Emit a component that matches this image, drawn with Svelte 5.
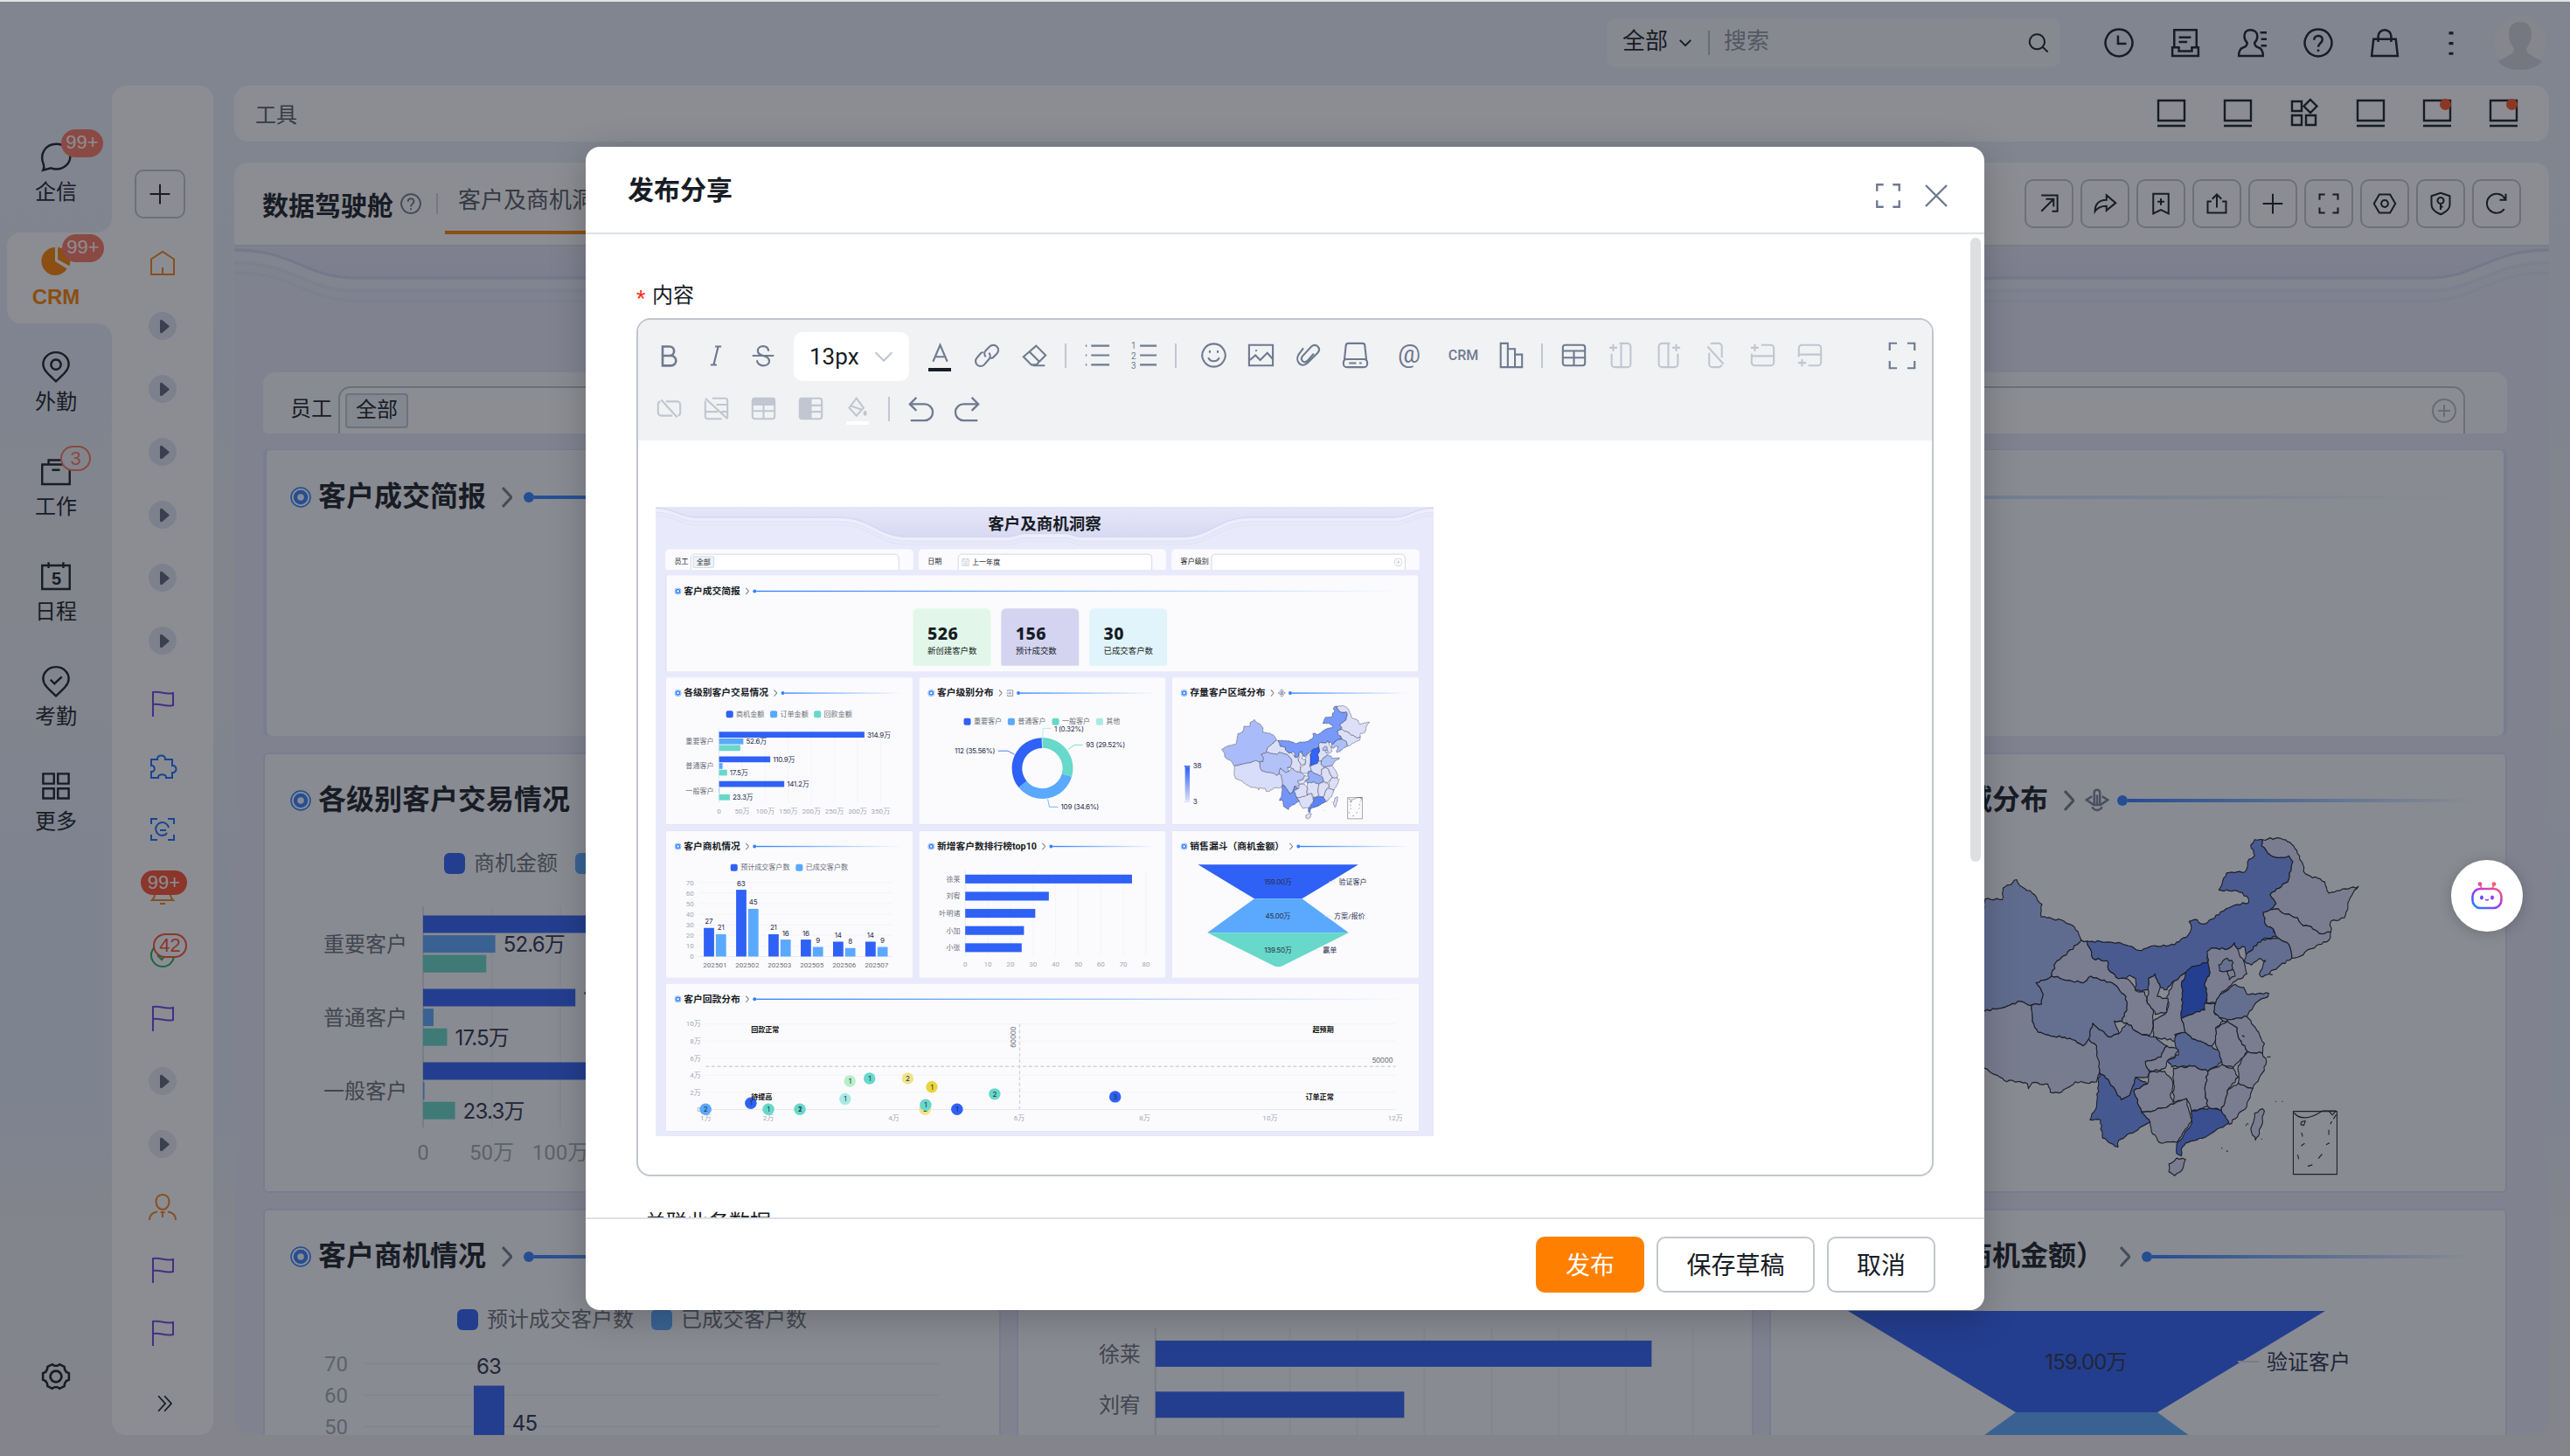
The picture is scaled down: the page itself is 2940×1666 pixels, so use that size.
<script lang="ts">
	type Point = [number, number];

	const BLUE = '#2f61f6';
	const SKY = '#5aa9ff';
	const TEAL = '#67d8c9';
	const MINT = '#a8ebe2';

	// All icons live on a 32x32 grid and are stroked
	const icons: Record<string, string> = {
		chat: 'M3 29c1-2 1-4 .5-5.500C-1 13 5 2.500 16.500 2.500c8 0 14 5.500 14 12.500s-6 13-14 13c-2 0-4-.4-5.500-1z',
		pin: 'M16 30.500C11 25.500 3 20 3 13a13 12 0 0 1 26 0c0 7-8 12.500-13 17.500zM16 8.500a5 5 0 1 0 .01 0z',
		pinCheck: 'M16 30.500C11 25.500 3 20 3 13a13 12 0 0 1 26 0c0 7-8 12.500-13 17.500zM10.500 14l4 4 7.500-7',
		work: 'M2 8.500h28v20H2zM8.500 8V4h14v4M12 14h8',
		calendar: 'M2 4.500h28v24H2zM8.500 1v6M23.500 1v6',
		grid: 'M3 3h11v10H3zM18 3h11v10H18zM3 18h11v10H3zM18 18h11v10H18z',
		gear: 'M12 3l2.500 1.500h3L20 3l5 2.500.5 3 1.500 2.500 3 1.500v7l-3 1.500-1.500 2.500-.5 3-5 2.500-2.500-1.500h-3L12 29l-5-2.500-.5-3L5 21l-3-1.500v-7L5 11l1.500-2.500.5-3zM16 10a6 6 0 1 0 .01 0z',
		plus: 'M16 3v26M3 16h26',
		home: 'M3 11.500L16 3l13 8.500V29H3zM16 29v-8',
		flag: 'M5 31V3c8-2 13 3.500 23 1v14c-10 2.500-15-3-23-1',
		puzzle: 'M3 8h7c-1-6 10-6 9 0h8v7c6-1 6 9 0 8v6h-7c1-5-10-5-9 0H3v-7c5 1 5-8 0-7z',
		scan: 'M3 10V4h7M22 4h7v6M3 22v6h7M22 28h7v-6M23 14a7.500 7.500 0 1 0-8 9c3 0 5-1 6-3M13 17h7',
		bell: 'M4 25h24c-3-3-3-5-3-9a9 9 0 0 0-18 0c0 4 0 6-3 9zM13 29h6',
		check: 'M16 3a13 13 0 1 0 .01 0zM10 16l5 5 8-9',
		person: 'M16 2c-5 0-7.500 3.500-7.500 8s3 9 7.500 9 7.500-4.500 7.500-9S21 2 16 2zM1 31c0-6 3-8.500 9-9.500M31 31c0-6-3-8.500-9-9.500M13.500 22h5M16 22v6',
		more: 'M7 6l9 10-9 10M15 6l9 10-9 10',
		search: 'M14 4a10.500 10.500 0 1 0 .01 0zM22 22l7 7',
		clock: 'M16 1.500a14.500 14.500 0 1 0 .01 0zM15 8v9h9',
		inbox: 'M4 21V2h24v19M9 10h13M9 15h9M2 21h7v4h14v-4h7v9H2z',
		contact: 'M14 2c-4 0-6 3-6 7 0 3 1 5 3 7 0 3-1 4-4 5-4 1-5 4-5 9h26c0-5-1-8-5-9-3-1-4-2-4-5 2-2 3-4 3-7 0-4-3-7-8-7zM25 5h7M26 12h6M26 19h6',
		help: 'M16 1.500a14.500 14.500 0 1 0 .01 0zM11.500 13c0-6 9-6 9-.5 0 4-4.500 4-4.500 8M16 23v2.500',
		bag: 'M4 12h24l2 18H2zM9 15V9a7 7 0 0 1 14 0v6',
		dots: 'M16 4v3M16 15v3M16 26v3',
		screen: 'M1 2h30v23H1zM0 31h32',
		apps: 'M2 3h11v11H2zM23 1l7.500 7.500L23 16l-7.500-7.500zM2 19h11v11H2zM18 19h11v11H18z',
		out: 'M6 5h21v21h-7M6 26L22 10M12 10h10v10',
		share: 'M18 5l12 10-12 10v-6c-8 0-12 2-15 7 0-9 5-15 15-15z',
		bookmark: 'M6 3h20v26l-10-5-10 5zM16 9v9M11.500 13.500h9',
		upload: 'M9 13H4v15h24V13h-5M16 21V4M10 10l6-6 6 6',
		full: 'M4 11V4h7M21 4h7v7M28 21v7h-7M11 28H4v-7',
		hexagon: 'M9 4h14l7 12-7 12H9L2 16zM16 11.500a4.500 4.500 0 1 0 .01 0z',
		shield: 'M16 2l12 4v11c0 6-5 10-12 13C9 27 4 23 4 17V6zM16 8a4 4 0 1 0 .01 0zM16 16v8M16 20h3',
		refresh: 'M26 23a12.500 12.500 0 1 1 1-13M28 3v8h-8',
		close: 'M4 4l24 24M28 4L4 28',
		bold: 'M8 4h9a6 6 0 0 1 0 12H8zM8 16h11a6.500 6.500 0 0 1 0 13H8z',
		italic: 'M15 4h8M9 28h8M19 4l-6 24',
		strike: 'M23 10c0-4-3-6.500-7-6.500S9 6 9 9.500 12 15 16 16s8 3 8 7-4 6-8 6-8-3-8-7M2 16h28',
		color: 'M7 24L16 3l9 21M10 18h12',
		link: 'M14 18a6 6 0 0 1 0-8l5-5a6 6 0 0 1 9 9l-5 5-3 1M18 13a6 6 0 0 1 0 8l-6 7a6 6 0 0 1-9-9l5-6 3-1',
		eraser: 'M18 4l12 12-12 12h-6L2 18zM9 11l13 13M14 29h15',
		list: 'M8 4h23M8 16h23M8 28h23M1 4h1.500M1 16h1.500M1 28h1.500',
		numbered: 'M10 4h21M10 16h21M10 28h21',
		smile: 'M16 1.500a14.500 14.500 0 1 0 .01 0zM11 10v3M21 10v3M9 19c3 6 11 6 14 0',
		image: 'M1 3h30v26H1zM2 22l7-6 6 6 9-9 7 8M10 9v2',
		clip: 'M10 7L4 15c-5 8 3 18 11 11L28 13c5-6-2-13-8-8L9 17c-4 5 2 10 6 6l8-9',
		disk: 'M2 23L4 4c0-2 1-3 3-3h18c2 0 3 1 3 3l2 19M5 21h22a4 4 0 0 1 4 4v2a4 4 0 0 1-4 4H5a4 4 0 0 1-4-4v-2a4 4 0 0 1 4-4zM8 26h9M21 26h3',
		bars: 'M3 1h9v30H3zM12 8h9v23h-9zM21 15h9v16h-9z',
		table: 'M5 3h22a3 3 0 0 1 3 3v20a3 3 0 0 1-3 3H5a3 3 0 0 1-3-3V6a3 3 0 0 1 3-3zM2 10.500h28M2 19h28M16 10v19',
		colBefore: 'M14 1h10a4 4 0 0 1 4 4v22a4 4 0 0 1-4 4H8a4 4 0 0 1-4-4V14M16 1v30M6 2v9M1 6.500h10',
		colAfter: 'M18 1H8a4 4 0 0 0-4 4v22a4 4 0 0 0 4 4h16a4 4 0 0 0 4-4V14M16 1v30M26 2v9M21 6.500h10',
		colRemove: 'M8 13v14a4 4 0 0 0 4 4h8c2 0 3-1 4-3M10 2c1-1 2-1 3-1h7a4 4 0 0 1 4 4v14M6 5l20 22',
		rowBefore: 'M14 3h12a4 4 0 0 1 4 4v18a4 4 0 0 1-4 4H6a4 4 0 0 1-4-4V14M2 17h28M6 2v9M1 6.500h10',
		rowAfter: 'M14 29h12a4 4 0 0 0 4-4V7a4 4 0 0 0-4-4H6a4 4 0 0 0-4 4v11M2 15h28M6 21v9M1 25.500h10',
		merge: 'M12 7h14a4 4 0 0 1 4 4v10a4 4 0 0 1-3 4M20 25H6a4 4 0 0 1-4-4V11a4 4 0 0 1 3-4M6 5l20 22',
		tableOff: 'M11 3h16a3 3 0 0 1 3 3v22M23 29H5a3 3 0 0 1-3-3V6M2 3l28 26M16 11h14M2 20h16M22 20h8',
		bucket: 'M14 3l9 12-9 10L5 15zM8 13l12 4M25 19c-2 3-1 5 0 5s2-2 0-5',
		undo: 'M11 2L3 10l8 8M4 10h17a9 9 0 0 1 0 20H4',
		redo: 'M21 2l8 8-8 8M28 10H11a9 9 0 0 0 0 20h17',
		enter: 'M6 9V4h22v24H6v-5M2 16h18M15 10l6 6-6 6',
		drill: 'M16 1c-3 0-4 2-4 4v17h8V5c0-2-1-4-4-4zM16 8v14M9 10l-8 5 10 7M23 10l8 5-10 7M9 25c3 6 11 6 14 0',
		down: 'M6 11l10 10 10-10'
	};

	const navItems = [
		{ label: '企信', icon: 'chat', badge: '99+' },
		{ label: 'CRM', icon: 'pie', badge: '99+', active: true },
		{ label: '外勤', icon: 'pin' },
		{ label: '工作', icon: 'work', badge: '3' },
		{ label: '日程', icon: 'calendar' },
		{ label: '考勤', icon: 'pinCheck' },
		{ label: '更多', icon: 'grid' }
	];

	const railItems = [
		{ icon: 'home', color: '#f58220' },
		...Array.from({ length: 6 }, () => ({ icon: 'play', color: '#e1e7f4' })),
		{ icon: 'flag', color: '#7341e0' },
		{ icon: 'puzzle', color: '#1a6dff' },
		{ icon: 'scan', color: '#1a6dff' },
		{ icon: 'bell', color: '#f58220', badge: '99+' },
		{ icon: 'check', color: '#1fae62', badge: '42' },
		{ icon: 'flag', color: '#7341e0' },
		{ icon: 'play', color: '#e8e9f2' },
		{ icon: 'play', color: '#e8e9f2' },
		{ icon: 'person', color: '#f58220' },
		{ icon: 'flag', color: '#7341e0' },
		{ icon: 'flag', color: '#7341e0' }
	];

	const topIcons = ['clock', 'inbox', 'contact', 'help', 'bag', 'dots'];
	const toolIcons = [
		{ icon: 'screen' },
		{ icon: 'screen' },
		{ icon: 'apps' },
		{ icon: 'screen' },
		{ icon: 'screen', dot: true },
		{ icon: 'screen', dot: true }
	];
	const boardActions = ['out', 'share', 'bookmark', 'upload', 'plus', 'full', 'hexagon', 'shield', 'refresh'];

	const kpis = [
		{ value: 526, label: '新创建客户数', color: '#e2f7e9' },
		{ value: 156, label: '预计成交数', color: '#d4d4f1' },
		{ value: 30, label: '已成交客户数', color: '#e1f4fb' }
	];

	// Amounts in 万
	const levels = [
		{ name: '重要客户', y: 798, values: [314.9, 52.6, 46], labels: ['314.9万', '52.6万', ''] },
		{ name: '普通客户', y: 882, values: [110.9, 7.6, 17.5], labels: ['110.9万', '', '17.5万'] },
		{ name: '一般客户', y: 966, values: [141.2, 1, 23.3], labels: ['141.2万', '', '23.3万'] }
	];
	const levelColors = [BLUE, SKY, TEAL];
	const levelScale = 1.571;

	const slices = [
		{ pct: 29.52, color: TEAL },
		{ pct: 34.6, color: SKY },
		{ pct: 35.56, color: BLUE },
		{ pct: 0.32, color: MINT }
	];

	function arc(start: number, end: number) {
		const cx = 1318, cy = 890, R = 104, r = 69;
		const p = (pct: number, rad: number) => {
			const a = (pct / 100) * Math.PI * 2;
			return `${cx + rad * Math.sin(a)} ${cy - rad * Math.cos(a)}`;
		};
		return `M${p(start, R)}A${R} ${R} 0 0 1 ${p(end, R)}L${p(end, r)}A${r} ${r} 0 0 0 ${p(start, r)}Z`;
	}

	let sum = 0;
	const donut = slices.map((s) => {
		const d = arc(sum, sum + s.pct);
		sum += s.pct;
		return { d, color: s.color };
	});

	const months = [
		{ name: '202501', a: 27, b: 21 },
		{ name: '202502', a: 63, b: 45 },
		{ name: '202503', a: 21, b: 16 },
		{ name: '202505', a: 16, b: 9 },
		{ name: '202506', a: 14, b: 8 },
		{ name: '202507', a: 14, b: 9 }
	];

	const ranking = [
		{ name: '徐莱', value: 73.8 },
		{ name: '刘宥', value: 37 },
		{ name: '叶明诸', value: 31 },
		{ name: '小加', value: 26 },
		{ name: '小张', value: 25 }
	];

	const bubbles = [
		{ x: 170, y: 2050, n: 2, color: SKY },
		{ x: 324, y: 2029, n: 1, color: BLUE },
		{ x: 384, y: 2050, n: 1, color: TEAL },
		{ x: 491, y: 2050, n: 2, color: TEAL },
		{ x: 491, y: 2050, n: 1, color: 'none' },
		{ x: 661, y: 1954, n: 1, color: '#b8efc6' },
		{ x: 728, y: 1945, n: 1, color: TEAL },
		{ x: 645, y: 2015, n: 1, color: MINT },
		{ x: 858, y: 1945, n: 2, color: '#efe38c' },
		{ x: 940, y: 1974, n: 1, color: '#e8d63e' },
		{ x: 917, y: 2050, n: 2, color: '#efe38c' },
		{ x: 919, y: 2035, n: 1, color: TEAL },
		{ x: 1026, y: 2050, n: 1, color: BLUE },
		{ x: 1154, y: 1998, n: 2, color: TEAL },
		{ x: 1564, y: 2007, n: 3, color: BLUE }
	];

	const BASE = '#dcdff8';
	const provinces: { color: string; pts: string }[] = [
		{ color: '#a9bcf9', pts: '-102,483 -58,460 10,444 22,377 60,367 70,328 113,330 115,304 140,292 150,285 158,298 190,315 215,340 213,368 265,375 298,390 316,420 305,430 270,455 250,470 240,500 200,515 218,540 214,562 188,565 160,556 105,572 67,578 -5,592 -30,560 -75,535 -80,505' },
		{ color: BASE, pts: '316,420 330,422 345,460 382,465 385,485 410,505 430,505 440,510 455,532 478,535 485,560 500,575 500,610 490,632 470,630 432,604 400,600 420,600 432,570 430,545 395,515 340,500 320,515 240,500 250,470 270,455 305,430' },
		{ color: '#b2c2f8', pts: '240,500 320,515 340,500 395,515 430,545 432,570 420,600 400,600 412,628 385,635 345,605 335,640 320,655 300,643 205,625 190,600 188,565 214,562 218,540 200,515' },
		{ color: '#d8ddf9', pts: '-5,592 67,578 105,572 160,556 188,565 190,600 205,625 300,643 320,655 335,640 355,655 362,700 362,715 355,735 330,738 300,735 265,758 236,758 230,740 190,737 180,750 178,740 140,732 125,735 80,712 53,690 5,675 -7,652' },
		{ color: '#7898fa', pts: '330,422 385,424 410,425 470,443 505,432 555,430 590,408 598,393 592,378 605,374 632,384 680,355 708,342 745,336 740,322 715,310 668,308 688,270 735,268 745,240 760,232 750,208 760,196 780,196 778,210 800,230 822,236 848,232 858,245 845,290 800,318 815,338 800,352 782,358 788,385 808,395 815,412 780,418 738,452 735,435 715,438 708,426 690,440 650,437 638,460 640,470 583,492 555,510 535,530 518,525 505,495 488,505 490,530 455,532 455,505 440,498 430,505 410,505 385,485 382,465 345,460' },
		{ color: BASE, pts: '780,196 820,192 850,202 868,220 890,272 940,290 950,315 1026,300 1005,325 990,370 955,378 955,402 925,405 905,390 885,388 870,370 840,362 820,350 800,352 815,338 800,318 845,290 858,245 848,232 822,236 800,230 778,210' },
		{ color: BASE, pts: '800,352 820,350 840,362 870,370 885,388 905,390 925,405 955,402 950,420 900,440 885,452 855,460 848,430 820,415 808,395 788,385 782,358' },
		{ color: '#acbff9', pts: '738,452 780,418 820,415 848,430 855,460 820,480 780,502 772,495 788,465 770,462 752,475 733,465' },
		{ color: BASE, pts: '640,470 638,445 650,437 690,440 708,426 715,438 720,450 735,475 740,495 712,510 700,520 672,540 660,560 636,558 638,540 632,515 645,492' },
		{ color: '#b2c2f8', pts: '668,475 690,460 705,470 700,488 670,488' },
		{ color: BASE, pts: '690,488 705,485 710,500 695,508' },
		{ color: '#3263fb', pts: '583,492 600,478 640,470 645,492 632,515 638,540 632,575 600,585 572,594 575,545 572,520' },
		{ color: BASE, pts: '583,492 572,520 575,545 572,594 582,625 555,630 565,645 500,635 500,600 530,585 540,565 535,545 555,510' },
		{ color: BASE, pts: '488,505 505,495 518,525 510,545 538,550 535,580 505,585 500,575 485,560' },
		{ color: '#b0c1f8', pts: '660,560 672,540 710,518 732,525 740,540 796,538 794,546 765,558 740,590 700,598 665,592 655,580' },
		{ color: '#d8ddf9', pts: '632,560 660,560 655,580 680,600 660,615 660,640 650,655 600,640 582,625 572,594 600,585 632,575' },
		{ color: BASE, pts: '680,600 740,590 765,620 785,650 780,672 742,668 720,640 715,615' },
		{ color: BASE, pts: '660,615 690,600 715,615 720,640 742,668 720,690 705,703 678,698 665,668 660,640' },
		{ color: '#93acfa', pts: '560,630 582,625 600,640 650,655 670,670 675,692 640,712 600,700 548,702 536,688 565,675 555,645' },
		{ color: '#bcc9f8', pts: '345,605 385,635 412,628 432,604 470,630 505,635 535,655 520,680 480,690 490,715 485,725 455,725 440,765 418,775 385,730 362,715 355,655 335,640' },
		{ color: BASE, pts: '535,655 565,665 555,680 536,688 530,705 500,712 485,705 480,690 520,680' },
		{ color: BASE, pts: '490,715 530,712 550,735 545,770 552,785 500,800 470,802 450,755 485,740' },
		{ color: '#7494fa', pts: '362,715 385,730 418,775 440,765 455,725 485,740 450,755 470,802 492,825 440,850 412,865 410,880 370,860 365,820 338,820 355,790' },
		{ color: BASE, pts: '470,802 500,800 552,785 585,772 592,800 600,820 575,850 560,870 515,870 495,845 492,825' },
		{ color: '#5a82fb', pts: '598,800 650,792 690,805 692,828 640,855 590,870 575,880 572,900 560,895 560,875 600,825' },
		{ color: BASE, pts: '552,705 600,700 640,712 632,750 640,790 598,800 585,772 552,780' },
		{ color: BASE, pts: '640,712 675,697 705,705 718,725 690,755 675,800 640,790 632,750' },
		{ color: BASE, pts: '718,738 755,750 740,790 695,830 675,800 690,755' },
		{ color: BASE, pts: '742,668 780,672 790,690 780,715 755,750 718,738 718,700' },
		{ color: BASE, pts: '780,795 785,800 772,850 762,865 750,840 760,805' },
		{ color: BASE, pts: '540,918 560,905 583,908 575,930 555,944 540,935' }
	];

	// Break straight borders into small steps; both sides of a shared border get the same ones
	function roughen(str: string) {
		const pts = str.split(' ').map((p) => p.split(',').map(Number) as Point);
		const out: Point[] = [];
		pts.forEach((a, i) => {
			const b = pts[(i + 1) % pts.length];
			const flip = a[0] > b[0] || (a[0] === b[0] && a[1] > b[1]);
			const [p, q] = flip ? [b, a] : [a, b];
			const len = Math.hypot(q[0] - p[0], q[1] - p[1]);
			const n = Math.max(1, Math.round(len / 7));
			const seg: Point[] = [];
			for (let k = 1; k < n; k++) {
				const h = Math.sin(p[0] * 12.9 + p[1] * 78.2 + q[0] * 3.7 + k * 41.3) * 43758.5;
				const off = (h - Math.floor(h) - 0.5) * 5;
				seg.push([
					p[0] + ((q[0] - p[0]) * k) / n - ((q[1] - p[1]) / len) * off,
					p[1] + ((q[1] - p[1]) * k) / n + ((q[0] - p[0]) / len) * off
				]);
			}
			out.push(a, ...(flip ? seg.reverse() : seg));
		});
		return out.map((p) => `${p[0].toFixed(1)},${p[1].toFixed(1)}`).join(' ');
	}

	const regions = provinces.map((p) => ({ color: p.color, pts: roughen(p.pts) }));

	const wave =
		'M0 4C70 4 80 36 140 36H620C740 36 750 102 860 102H1200C1225 102 1230 91 1255 91H1393C1418 91 1423 102 1448 102H1788C1898 102 1908 36 2028 36H2508C2568 36 2578 4 2648 4';

	// '|' is a divider
	const tools1 = ['color', 'link', 'eraser', '|', 'list', 'numbered', '|s', 'smile', 'image', 'clip', 'disk', '@', 'CRM', 'bars', '|', 'table'];
	const toolsOff1 = ['colBefore', 'colAfter', 'colRemove', 'rowBefore', 'rowAfter'];
	const toolsOff2 = ['merge', 'tableOff', 'headRow', 'headCol', 'bucket'];
</script>

{#snippet icon(name: string, size = 32, width = 2)}
	<svg class="icon" viewBox="0 0 32 32" style="width: {size}px; height: {size}px; stroke-width: {(width * 32) / size}">
		<path d={icons[name]} />
	</svg>
{/snippet}

{#snippet cardTitle(text: string, extra = '')}
	<div class="card-title">
		<svg class="ring" viewBox="0 0 24 24">
			<circle cx="12" cy="12" r="11" stroke-width="1.6" />
			<circle cx="12" cy="12" r="6" stroke-width="4.500" />
		</svg>
		<h3>{text}</h3>
		<svg class="go" viewBox="0 0 12 26"><path d="M1 2l10 11L1 24" /></svg>
		{#if extra}<span class="extra">{@render icon(extra, 26, 2.5)}</span>{/if}
		<i class="knob"></i>
		<i class="trail"></i>
	</div>
{/snippet}

{#snippet legend(items: [number, string, string][], y: number)}
	{#each items as [x, label, color]}
		<rect {x} y={y - 12} width="24" height="24" rx="6" fill={color} />
		<text x={x + 34} y={y - 1} dy=".36em" class="t-mid">{label}</text>
	{/each}
{/snippet}

{#snippet dashboard()}
	<div class="board">
		<svg class="waves" viewBox="0 0 2648 144">
			<defs>
				<linearGradient id="wave-fill" x1="0" y1="0" x2="0" y2="1">
					<stop offset="0" stop-color="#e6e6f9" />
					<stop offset="1" stop-color="#d8d9f3" />
				</linearGradient>
			</defs>
			<path d="{wave}V0H0Z" fill="url(#wave-fill)" />
			<g transform="translate(0 7)"><path d={wave} class="wave-line light" /></g>
			<g transform="translate(0 15)"><path d={wave} class="wave-line faint" /></g>
			<g transform="translate(0 26)"><path d={wave} class="wave-line faint" /></g>
			<path d={wave} class="wave-line" />
		</svg>
		<h2>客户及商机洞察</h2>

		<div class="filters">
			<div class="filter">
				<label>员工</label>
				<div class="field"><span class="tag">全部</span></div>
			</div>
			<div class="filter date">
				<label>日期</label>
				<div class="field">
					<svg viewBox="0 0 26 28" class="cal"><path d="M1 4h24v22H1zM1 11h24M6 17h14M6 22h14M7 0v7M19 0v7" /></svg>
					上一年度
				</div>
			</div>
			<div class="filter level">
				<label>客户级别</label>
				<div class="field end">
					<svg viewBox="0 0 28 28" class="add"><circle cx="14" cy="14" r="13" /><path d="M14 7v14M7 14h14" /></svg>
				</div>
			</div>
		</div>

		<section class="card brief">
			{@render cardTitle('客户成交简报')}
			<div class="kpis">
				{#each kpis as k}
					<div class="kpi" style="background: {k.color}">
						<b>{k.value}</b>
						<span>{k.label}</span>
					</div>
				{/each}
			</div>
		</section>

		<div class="cards">
			<section class="card">
				{@render cardTitle('各级别客户交易情况')}
				<svg class="chart" viewBox="33 659 844 424">
					{@render legend([[240, '商机金额', BLUE], [390, '订单金额', SKY], [539, '回款金额', TEAL]], 706)}
					{#each [0, 50, 100, 150, 200, 250, 300, 350] as v}
						<line x1={216 + v * levelScale} x2={216 + v * levelScale} y1="755" y2="1008" class={v ? 'grid' : 'axis'} />
						<text x={216 + v * levelScale} y="1036" dy=".36em" class="t-tick" text-anchor="middle">{v ? v + '万' : '0'}</text>
					{/each}
					{#each levels as l}
						<text x="198" y={l.y} dy=".36em" class="t-mid" text-anchor="end">{l.name}</text>
						{#each l.values as v, i}
							<rect x="216" y={l.y - 32.5 + i * 22.6} width={v * levelScale} height="20" fill={levelColors[i]} />
							{#if l.labels[i]}
								<text x={225 + v * levelScale} y={l.y - 22 + i * 22.6} dy=".36em" class="t-dark num">{l.labels[i]}</text>
							{/if}
						{/each}
					{/each}
				</svg>
			</section>

			<section class="card">
				{@render cardTitle('客户级别分布', 'enter')}
				<svg class="chart" viewBox="896 659 844 424">
					{@render legend([[1050, '重要客户', BLUE], [1200, '普通客户', SKY], [1351, '一般客户', TEAL], [1501, '其他', MINT]], 731)}
					{#each donut as s}
						<path d={s.d} fill={s.color} />
					{/each}
					<path d="M1167 831H1200L1223 843" stroke={BLUE} class="leader" />
					<path d="M1348 754H1320L1319 786" stroke={MINT} class="leader" />
					<path d="M1455 811H1427L1406 826" stroke={TEAL} class="leader" />
					<path d="M1371 1022H1342L1336 995" stroke={SKY} class="leader" />
					<text x="1156" y="830" dy=".36em" text-anchor="end" class="t-dark num">112 (35.56%)</text>
					<text x="1358" y="755" dy=".36em" class="t-dark num">1 (0.32%)</text>
					<text x="1466" y="811" dy=".36em" class="t-dark num">93 (29.52%)</text>
					<text x="1381" y="1022" dy=".36em" class="t-dark num">109 (34.6%)</text>
				</svg>
			</section>

			<section class="card">
				{@render cardTitle('存量客户区域分布', 'drill')}
				<svg class="chart" viewBox="1756 659 844 424">
					<defs>
						<linearGradient id="heat" x1="0" y1="0" x2="0" y2="1">
							<stop offset="0" stop-color={BLUE} />
							<stop offset="1" stop-color="#dcdff8" />
						</linearGradient>
					</defs>
					<rect x="1802" y="885" width="16" height="116" fill="url(#heat)" />
					<rect x="1799" y="881" width="20" height="4" fill={BLUE} />
					<rect x="1799" y="1002" width="20" height="4" fill="#dcdff8" />
					<text x="1829" y="882" dy=".36em" class="t-dark num">38</text>
					<text x="1829" y="1003" dy=".36em" class="t-dark num">3</text>
					<g transform="translate(1972 578) scale(.4464 .514)" class="map">
						{#each regions as r}
							<polygon points={r.pts} fill={r.color} />
						{/each}
						<rect x="859" y="801" width="112" height="140" fill="none" />
						<path d="M861 804c15 18 45 12 72-4h35l-9 9-8-8M880 824l10-2-4 10-8-2zM880 848l3 9M888 872l-9 6M870 897l3 10M896 923l12-3M923 906l10-10M943 875l9-4M950 842v11M954 829l4-6M962 818l7-10" fill="none" />
						<path d="M675 882l2 2M688 888l3 3M738 830v3M741 827l2 3M813 779h2M830 779h2M777 862h2M798 496l8 1M792 680l9-1M728 632l6 3" fill="none" />
					</g>
				</svg>
			</section>

			<section class="card">
				{@render cardTitle('客户商机情况')}
				<svg class="chart" viewBox="33 1181 844 424">
					{@render legend([[255, '预计成交客户数', BLUE], [477, '已成交客户数', SKY]], 1228)}
					{#each [0, 10, 20, 30, 40, 50, 60, 70] as v}
						<line x1="147" x2="806" y1={1530.700 - v * 3.606} y2={1530.700 - v * 3.606} class={v ? 'grid' : 'axis'} />
						<text x="130" y={1530.700 - v * 3.606} dy=".36em" text-anchor="end" class="t-tick">{v}</text>
					{/each}
					{#each months as m, i}
						<rect x={164 + i * 110} y={1530.700 - m.a * 3.606} width="35" height={m.a * 3.606} fill={BLUE} />
						<rect x={205 + i * 110} y={1530.700 - m.b * 3.606} width="35" height={m.b * 3.606} fill={SKY} />
						<text x={181 + i * 110} y={1508.500 - m.a * 3.606} dy=".36em" text-anchor="middle" class="t-dark num">{m.a}</text>
						<text x={222 + i * 110} y={1508.500 - m.b * 3.606} dy=".36em" text-anchor="middle" class="t-dark num">{m.b}</text>
						<text x={202 + i * 110} y="1558" dy=".36em" text-anchor="middle" class="t-mid">{m.name}</text>
					{/each}
				</svg>
			</section>

			<section class="card">
				{@render cardTitle('新增客户数排行榜top10')}
				<svg class="chart" viewBox="895 1181 844 424">
					{#each [0, 10, 20, 30, 40, 50, 60, 70, 80] as v}
						<line x1={1054 + v * 7.700} x2={1054 + v * 7.700} y1="1237" y2="1530" class={v ? 'grid' : 'axis'} />
						<text x={1054 + v * 7.700} y="1558" dy=".36em" text-anchor="middle" class="t-tick">{v}</text>
					{/each}
					{#each ranking as r, i}
						<rect x="1054" y={1252 + i * 58.500} width={r.value * 7.700} height="30" fill={BLUE} />
						<text x="1037" y={1267 + i * 58.500} dy=".36em" text-anchor="end" class="t-mid">{r.name}</text>
					{/each}
				</svg>
			</section>

			<section class="card">
				{@render cardTitle('销售漏斗（商机金额）')}
				<svg class="chart" viewBox="1756 1181 844 424">
					<polygon points="1846,1218 2392,1218 2200,1334 2038,1334" fill={BLUE} />
					<polygon points="2038,1334 2200,1334 2359,1450 1878,1450" fill={SKY} />
					<polygon points="1878,1450 2359,1450 2130,1564 2119,1566 2108,1564" fill={TEAL} />
					<path d="M2292 1276h24M2276 1393h24M2242 1509h20" class="axis" />
					<text x="2118" y="1276" dy=".36em" text-anchor="middle" class="t-dark num">159.00万</text>
					<text x="2118" y="1393" dy=".36em" text-anchor="middle" class="t-dark num">45.00万</text>
					<text x="2118" y="1509" dy=".36em" text-anchor="middle" class="t-dark num">139.50万</text>
					<text x="2325" y="1276" dy=".36em" class="t-dark">验证客户</text>
					<text x="2309" y="1393" dy=".36em" class="t-dark">方案/报价</text>
					<text x="2271" y="1509" dy=".36em" class="t-dark">赢单</text>
				</svg>
			</section>
		</div>

		<section class="card payback">
			{@render cardTitle('客户回款分布')}
			<svg class="chart" viewBox="33 1700 2567 426">
				{#each [0, 2, 4, 6, 8, 10] as v}
					<line x1="170" x2="2519" y1={2050.500 - v * 29.150} y2={2050.500 - v * 29.150} class={v ? 'grid' : 'axis'} />
					<text x="154" y={2050.500 - v * 29.150} dy=".36em" text-anchor="end" class="t-tick">{v ? v + '万' : '0'}</text>
				{/each}
				{#each [1, 2, 4, 6, 8, 10, 12] as v}
					<text x={-42.600 + v * 213.400} y="2079" dy=".36em" text-anchor="middle" class="t-tick">{v}万</text>
				{/each}
				<path d="M170 1904H2519M1239 1759V2050" class="mark" />
				<text x="2509" y="1883" dy=".36em" text-anchor="end" class="t-mid num">50000</text>
				<text transform="translate(1216 1804) rotate(-90)" dy=".36em" text-anchor="middle" class="t-mid num">60000</text>
				<text x="325" y="1780" dy=".36em" class="t-zone">回款正常</text>
				<text x="2308" y="1780" dy=".36em" text-anchor="end" class="t-zone">超预期</text>
				<text x="2308" y="2007" dy=".36em" text-anchor="end" class="t-zone">订单正常</text>
				{#each bubbles as b}
					<circle cx={b.x} cy={b.y} r="20" fill={b.color} />
					<text x={b.x} y={b.y} dy=".36em" text-anchor="middle" class="t-dark num">{b.n}</text>
				{/each}
				<text x="325" y="2007" dy=".36em" class="t-zone">待提高</text>
			</svg>
		</section>
	</div>
{/snippet}

<div class="page">
	<header class="topbar">
		<div class="search">
			<span>全部</span>
			{@render icon('down', 20, 2)}
			<i></i>
			<em>搜索</em>
			{@render icon('search', 26, 2)}
		</div>
		<div class="top-icons">
			{#each topIcons as name}
				<span>{@render icon(name, 34, name === 'dots' ? 5 : 2.5)}</span>
			{/each}
		</div>
		<svg class="avatar" viewBox="0 0 60 64">
			<ellipse cx="30" cy="32" rx="30" ry="32" fill="#f2f2f4" />
			<path d="M30 8c-9 0-13 6-13 14 0 9 4 13 6 17 0 6-8 8-18 14 5 7 14 10 24 10s21-3 26-10c-10-6-18-8-18-14 2-4 6-8 6-17 0-8-4-14-13-14z" fill="#d2d5da" />
		</svg>
	</header>

	<div class="body">
		<nav class="nav">
			{#each navItems as item}
				<div class="nav-item" class:active={item.active}>
					<div class="nav-icon">
						{#if item.icon === 'pie'}
							<svg viewBox="0 0 32 32" class="pie"><path d="M15 1v15l13 8A15 15 0 1 1 15 1zM18 1a15 15 0 0 1 12.500 20L18 14z" /></svg>
						{:else}
							{@render icon(item.icon, 36, 2.4)}
						{/if}
						{#if item.icon === 'calendar'}<b class="day">5</b>{/if}
						{#if item.badge}<span class="badge" class:hollow={item.badge === '3'}>{item.badge}</span>{/if}
					</div>
					<span>{item.label}</span>
				</div>
			{/each}
			<div class="settings">{@render icon('gear', 34, 2.6)}</div>
		</nav>

		<aside class="rail">
			<button class="add-btn" aria-label="add">{@render icon('plus', 28, 2)}</button>
			{#each railItems as r}
				<div class="rail-item" style="color: {r.color}">
					{#if r.icon === 'play'}
						<i class="play"><svg viewBox="0 0 12 16"><path d="M1 2c0-2 2-2 3-1l7 6c1 1 1 1 0 2l-7 6c-1 1-3 1-3-1z" /></svg></i>
					{:else}
						{@render icon(r.icon, 32, 2)}
					{/if}
					{#if r.badge}<span class="rail-badge" class:hollow={r.badge === '42'}>{r.badge}</span>{/if}
				</div>
			{/each}
			<div class="expand">{@render icon('more', 28, 1.8)}</div>
		</aside>

		<main>
			<div class="toolbar">
				<span>工具</span>
				<div class="tool-icons">
					{#each toolIcons as t}
						<span class="tool">
							{@render icon(t.icon, 32, 2.4)}
							{#if t.dot}<i></i>{/if}
						</span>
					{/each}
				</div>
			</div>
			<div class="board-head">
				<h1>数据驾驶舱</h1>
				<span class="hint">{@render icon('help', 24, 2)}</span>
				<i class="sep"></i>
				<div class="tab">客户及商机洞察</div>
				<div class="actions">
					{#each boardActions as a}
						<button aria-label={a}>{@render icon(a, 28, 2)}</button>
					{/each}
				</div>
			</div>
			<div class="viewport">{@render dashboard()}</div>
		</main>
	</div>

	<div class="mask"></div>
	<div class="edge"></div>

	<div class="robot">
		<svg viewBox="0 0 36 32">
			<defs>
				<linearGradient id="bot" x1="0" y1="1" x2="1" y2="0">
					<stop offset="0" stop-color="#1689ff" />
					<stop offset=".5" stop-color="#9b35ff" />
					<stop offset="1" stop-color="#ff5a6b" />
				</linearGradient>
			</defs>
			<rect x="1.500" y="8" width="33" height="22" rx="9" fill="none" stroke="url(#bot)" stroke-width="2.600" />
			<path d="M12 8L10 3M24 8l2-5" stroke="#f0489a" stroke-width="1.500" />
			<circle cx="10" cy="2.600" r="2.400" fill="#f0489a" />
			<circle cx="26" cy="2.600" r="2.400" fill="#ff5a6b" />
			<ellipse cx="12" cy="18" rx="2" ry="2.500" fill="#6a4bff" />
			<ellipse cx="24" cy="18" rx="2" ry="2.500" fill="#9b35ff" />
			<path d="M16 20q2 2 4 0" fill="none" stroke="#8a40ff" stroke-width="1.400" />
		</svg>
	</div>

	<div class="modal">
		<div class="modal-head">
			<h2>发布分享</h2>
			{@render icon('full', 34, 2.4)}
			{@render icon('close', 32, 2.4)}
		</div>
		<div class="modal-body">
			<div class="field-label"><b>*</b>内容</div>
			<div class="editor">
				<div class="tools">
					<div class="tools-row">
						<span>{@render icon('bold', 28, 2.6)}</span>
						<span>{@render icon('italic', 28, 2.2)}</span>
						<span>{@render icon('strike', 28, 2.2)}</span>
						<div class="select">13px{@render icon('down', 30, 2.2)}</div>
						{#each tools1 as t}
							{#if t[0] === '|'}
								<i class="divider" class:wide={t === '|s'}></i>
							{:else if t === '@' || t === 'CRM'}
								<span class="glyph" class:crm={t === 'CRM'}>{t}</span>
							{:else}
								<span class={t}>
									{@render icon(t, 29, 2.1)}
									{#if t === 'numbered'}
										<svg class="nums" viewBox="0 0 8 32"><text y="8">1</text><text y="19.500">2</text><text y="31">3</text></svg>
									{/if}
								</span>
							{/if}
						{/each}
						{#each toolsOff1 as t}
							<span class="off">{@render icon(t, 29, 2.1)}</span>
						{/each}
						<span class="last">{@render icon('full', 38, 2.2)}</span>
					</div>
					<div class="tools-row second">
						{#each toolsOff2 as t}
							<span class="off {t}">
								{#if t === 'headRow'}
									<svg viewBox="0 0 32 32" class="icon fixed"><path d={icons.table} /><path d="M3 4h26v7H3z" fill="currentColor" /></svg>
								{:else if t === 'headCol'}
									<svg viewBox="0 0 32 32" class="icon fixed"><path d="M5 3h22a3 3 0 0 1 3 3v20a3 3 0 0 1-3 3H5a3 3 0 0 1-3-3V6a3 3 0 0 1 3-3zM16 12h14M16 20h14" /><path d="M3 4h13v24H3z" fill="currentColor" /></svg>
								{:else}
									{@render icon(t, 29, 2.1)}
								{/if}
							</span>
						{/each}
						<i class="divider"></i>
						<span>{@render icon('undo', 30, 2.3)}</span>
						<span>{@render icon('redo', 30, 2.3)}</span>
					</div>
				</div>
				<div class="content">
					<div class="snapshot">{@render dashboard()}</div>
				</div>
			</div>
			<div class="field-label next">关联业务数据</div>
			<i class="scroll"></i>
		</div>
		<div class="modal-foot">
			<button class="primary">发布</button>
			<button>保存草稿</button>
			<button>取消</button>
		</div>
	</div>
</div>

<style>
	:global(body) {
		margin: 0;
	}

	.page {
		position: relative;
		width: 2940px;
		height: 1666px;
		overflow: hidden;
		font-family: Roboto, 'Noto Sans CJK SC', sans-serif;
		font-size: 24px;
		color: #181c25;
		background: linear-gradient(#eceffa 0, #e8edfa 430px, #eeeff3 620px, #eceef5 820px, #e4eafa 1000px, #e4eafa 1260px, #eeeef2 1400px, #eeeef1 100%);
	}

	.page *,
	.page *::before,
	.page *::after {
		box-sizing: border-box;
	}

	h1,
	h2,
	h3 {
		margin: 0;
	}

	i,
	em {
		font-style: normal;
	}

	button {
		padding: 0;
		font: inherit;
		color: inherit;
		background: none;
		border: 2px solid #c1c5ce;
		border-radius: 10px;
		display: flex;
		align-items: center;
		justify-content: center;
	}

	.icon {
		display: block;
		flex: none;
		fill: none;
		stroke: currentColor;
		overflow: visible;
	}

	.fixed {
		width: 29px;
		height: 29px;
		stroke-width: 2.3;
	}

	/* Top bar */
	.topbar {
		height: 98px;
		display: flex;
		align-items: center;
		padding-left: 1838px;
	}

	.search {
		width: 519px;
		height: 56px;
		display: flex;
		align-items: center;
		padding: 0 12px 0 18px;
		border-radius: 10px;
		font-size: 26px;
		line-height: 52px;
		background: rgba(255, 255, 255, 0.5);
	}

	.search span,
	.search em {
		height: 56px;
	}

	.search span {
		margin-right: 10px;
	}

	.search i {
		width: 2px;
		height: 28px;
		margin: 0 16px 0 16px;
		background: #b6bac6;
	}

	.search em {
		flex: 1;
		color: #91959e;
	}

	.top-icons {
		display: flex;
		margin-left: 29px;
	}

	.top-icons span {
		width: 76px;
		display: flex;
		justify-content: center;
	}

	.avatar {
		width: 60px;
		height: 64px;
		margin-left: 11px;
	}

	.body {
		display: flex;
		height: 1544px;
	}

	/* Left navigation */
	.nav {
		width: 128px;
		padding-top: 48px;
		display: flex;
		flex-direction: column;
		gap: 16px;
	}

	.nav-item {
		height: 104px;
		padding-top: 16px;
		display: flex;
		flex-direction: column;
		align-items: center;
		line-height: 40px;
	}

	.nav-icon {
		position: relative;
		height: 38px;
	}

	.pie {
		width: 34px;
		height: 34px;
		fill: #ff8000;
	}

	.nav-item.active {
		position: relative;
		margin-left: 8px;
		padding-right: 8px;
		border-radius: 16px 0 0 16px;
		background: #fff;
		color: #ff8000;
		font: bold 24px/40px 'Liberation Sans', Arial, sans-serif;
	}

	.nav-item.active::before,
	.nav-item.active::after {
		content: '';
		position: absolute;
		right: 0;
		width: 16px;
		height: 16px;
	}

	.nav-item.active::before {
		top: -16px;
		background: radial-gradient(circle at 0 0, transparent 15.5px, #fff 16px);
	}

	.nav-item.active::after {
		bottom: -16px;
		background: radial-gradient(circle at 0 100%, transparent 15.5px, #fff 16px);
	}

	.badge,
	.rail-badge {
		position: absolute;
		display: flex;
		align-items: center;
		justify-content: center;
		font: 22px/1 'Liberation Sans', Arial, sans-serif;
		padding-bottom: 2px;
		border-radius: 16px;
		color: #fff;
	}

	.badge {
		left: 24px;
		top: -14px;
		width: 48px;
		height: 32px;
		background: #ff7763;
	}

	.badge.hollow {
		width: 35px;
		height: 29px;
		top: -12px;
		left: 23px;
		padding-bottom: 0;
		color: #ff7763;
		background: #eeeff3;
		border: 2px solid #ff7763;
	}

	.day {
		position: absolute;
		left: 13px;
		top: 8px;
		font: bold 20px/24px 'Liberation Sans', Arial, sans-serif;
	}

	.settings {
		margin: auto 0 50px;
		display: flex;
		justify-content: center;
	}

	/* Shortcut rail */
	.rail {
		width: 116px;
		padding-top: 96px;
		border-radius: 16px;
		background: #fff;
	}

	.add-btn {
		width: 58px;
		height: 56px;
		margin: 0 0 15px 26px;
	}

	.rail-item {
		position: relative;
		height: 72px;
		display: flex;
		align-items: center;
		justify-content: center;
	}

	.play {
		width: 32px;
		height: 32px;
		padding-left: 3px;
		display: flex;
		align-items: center;
		justify-content: center;
		border-radius: 50%;
		background: currentColor;
	}

	.play svg {
		width: 12px;
		height: 17px;
		fill: #5d6577;
	}

	.rail-badge {
		left: 33px;
		top: 11px;
		width: 53px;
		height: 28px;
		padding-bottom: 0;
		background: #ff4f30;
	}

	.rail-badge.hollow {
		left: 47px;
		width: 39px;
		color: #ff4f30;
		background: #fff;
		border: 2px solid #ff4f30;
	}

	.expand {
		margin-top: 31px;
		padding-left: 5px;
		display: flex;
		justify-content: center;
	}

	/* Main column */
	main {
		width: 2648px;
		margin-left: 24px;
	}

	.toolbar {
		height: 64px;
		padding: 0 14px 2px 24px;
		display: flex;
		align-items: center;
		justify-content: space-between;
		border-radius: 16px;
		background: #fff;
		color: #545861;
	}

	.tool-icons {
		display: flex;
		color: #181c25;
	}

	.tool {
		position: relative;
		width: 76px;
		display: flex;
		justify-content: center;
	}

	.tool i {
		position: absolute;
		right: 22px;
		top: 0;
		width: 13px;
		height: 13px;
		border-radius: 50%;
		background: #ff522a;
	}

	.board-head {
		height: 96px;
		margin-top: 24px;
		padding: 0 32px 0 32px;
		display: flex;
		align-items: center;
		border-radius: 16px 16px 0 0;
		border-bottom: 2px solid #dee1ea;
		background: #fff;
	}

	h1 {
		font-size: 30px;
	}

	.hint {
		margin-left: 8px;
		color: #737c8c;
	}

	.sep {
		width: 2px;
		height: 24px;
		margin: 0 8px 0 17px;
		background: #d0d3db;
	}

	.tab {
		align-self: stretch;
		height: 82px;
		width: 216px;
		padding-left: 15px;
		border-bottom: 4px solid #ff8000;
		font-size: 26px;
		line-height: 86px;
		color: #545861;
		white-space: nowrap;
	}

	.actions {
		display: flex;
		gap: 8px;
		margin-left: auto;
	}

	.actions button {
		width: 56px;
		height: 56px;
	}

	.viewport {
		height: 1360px;
		overflow: hidden;
		border-radius: 0 0 16px 16px;
	}

	/* Dashboard */
	.board {
		position: relative;
		width: 2648px;
		height: 2143px;
		padding: 144px 48px 0 33px;
		background: #e8e9fa;
	}

	.waves {
		position: absolute;
		left: 0;
		top: 0;
		width: 2648px;
		height: 144px;
	}

	.wave-line {
		fill: none;
		stroke: #d2d4f0;
		stroke-width: 3;
	}

	.wave-line.light {
		stroke: #ededfb;
		stroke-width: 9;
	}

	.wave-line.faint {
		stroke: #e1e2f6;
	}

	.board h2 {
		position: absolute;
		left: 0;
		right: 0;
		top: 16px;
		text-align: center;
		font-size: 55px;
		line-height: 82px;
	}

	.filters,
	.cards {
		display: grid;
		grid-template-columns: 844px 843px 844px;
		column-gap: 18px;
	}

	.filter {
		height: 70px;
		padding: 16px 48px 0 31px;
		display: flex;
		overflow: hidden;
		border-radius: 14px 14px 6px 6px;
		background: #fbfbff;
	}

	.filter label {
		flex: none;
		width: 55px;
		line-height: 52px;
	}

	.filter.date label {
		width: 103px;
	}

	.filter.level label {
		width: 104px;
	}

	.field {
		flex: 1;
		height: 68px;
		padding: 6px 6px;
		display: flex;
		line-height: 42px;
		border: 2px solid #c1c5ce;
		border-radius: 14px;
		background: #fff;
	}

	.field.end {
		justify-content: flex-end;
		padding-right: 8px;
	}

	.tag {
		height: 40px;
		padding: 0 10px;
		line-height: 35px;
		border: 2px solid #c1c8d6;
		border-radius: 4px;
		background: #eef2fa;
	}

	.cal,
	.add {
		width: 26px;
		height: 28px;
		margin: 6px 9px 0 5px;
		fill: none;
		stroke: #b9bdc8;
		stroke-width: 2;
	}

	.add {
		width: 28px;
		margin-right: 0;
	}

	.card {
		border-radius: 6px;
		background: #fbfbfe;
		box-shadow: inset 0 0 0 2px #dddcfa;
	}

	.brief {
		height: 328px;
		margin: 18px 0 19px;
		box-shadow: inset 4px 0 #dddcfa, inset -4px 0 #dddcfa, inset 0 1px #dddcfa;
	}

	.cards {
		row-gap: 18px;
		margin-bottom: 16px;
	}

	.cards .card {
		height: 504px;
	}

	.payback {
		height: 506px;
	}

	.card-title {
		height: 80px;
		padding: 30px 36px 0 31px;
		display: flex;
		align-items: center;
	}

	.ring {
		width: 24px;
		height: 24px;
		flex: none;
		fill: none;
		stroke: #3380ff;
	}

	h3 {
		margin: -2px 18px 0 8px;
		font-size: 32px;
		line-height: 50px;
		white-space: nowrap;
	}

	.go {
		width: 12px;
		height: 26px;
		margin-right: 13px;
		fill: none;
		stroke: #737c8c;
		stroke-width: 3;
	}

	.extra {
		margin-right: 10px;
		color: #7b8496;
	}

	.knob {
		width: 12px;
		height: 12px;
		border-radius: 50%;
		background: #3380ff;
	}

	.trail {
		flex: 1;
		height: 4px;
		background: linear-gradient(90deg, #3380ff, rgba(110, 170, 255, 0.55) 60%, rgba(140, 190, 255, 0));
	}

	.chart {
		display: block;
		width: 100%;
	}

	.kpis {
		display: flex;
		justify-content: center;
		gap: 35px;
		margin: 34px 16px 0 0;
	}

	.kpi {
		width: 265px;
		height: 195px;
		padding: 46px 0 0 49px;
		border-radius: 16px 16px 4px 4px;
	}

	.kpi b {
		display: block;
		font: 800 58px/76px 'Noto Sans', sans-serif;
		letter-spacing: 1.5px;
	}

	.kpi span {
		font-size: 28px;
		line-height: 44px;
	}

	.chart text {
		font-size: 24px;
	}

	.t-dark {
		fill: #2a304d;
	}

	.num {
		font-family: Inter, 'Noto Sans CJK SC', sans-serif;
		letter-spacing: -0.8px;
	}

	.t-mid {
		fill: #6b7078;
	}

	.t-tick {
		fill: #a3a8b4;
	}

	.t-zone {
		fill: #111;
		font-weight: bold;
	}

	.grid {
		stroke: #eff0f4;
		stroke-width: 2;
	}

	.axis {
		stroke: #dcdfe6;
		stroke-width: 2;
	}

	.leader {
		fill: none;
		stroke-width: 2.5;
	}

	.mark {
		fill: none;
		stroke: #d4d5d8;
		stroke-width: 4;
		stroke-dasharray: 12 8;
	}

	.map {
		stroke: #20242c;
		stroke-width: 2.4;
		stroke-linejoin: round;
	}

	/* Layers over the page */
	.mask {
		position: absolute;
		inset: 0;
		background: rgba(24, 28, 37, 0.5);
	}

	.edge {
		position: absolute;
		inset: 0 0 auto;
		height: 2px;
		background: #dfe6df;
	}

	.robot {
		position: absolute;
		left: 2804px;
		top: 984px;
		width: 82px;
		height: 82px;
		display: flex;
		align-items: center;
		justify-content: center;
		border-radius: 50%;
		background: #fff;
		box-shadow: 0 2px 16px rgba(0, 0, 0, 0.2);
	}

	.robot svg {
		width: 36px;
		height: 32px;
	}

	.modal {
		position: absolute;
		left: 670px;
		top: 168px;
		width: 1600px;
		height: 1331px;
		display: flex;
		flex-direction: column;
		overflow: hidden;
		border-radius: 16px;
		background: #fff;
		box-shadow: 0 8px 40px rgba(0, 0, 0, 0.22);
	}

	.modal-head {
		height: 100px;
		padding: 14px 39px 0 48px;
		display: flex;
		align-items: center;
		gap: 22px;
		border-bottom: 2px solid #dee1e8;
		color: #6f7a90;
	}

	.modal-head h2 {
		flex: 1;
		margin-top: -18px;
		font-size: 30px;
		color: #181c25;
	}

	.modal-body {
		position: relative;
		flex: 1;
		padding: 50px 58px 0;
		overflow: hidden;
	}

	.field-label {
		height: 46px;
		line-height: 40px;
		display: flex;
	}

	.field-label b {
		width: 18px;
		color: #ff2a1a;
		font-weight: normal;
		line-height: 46px;
	}

	.field-label.next {
		padding-left: 10px;
		margin-top: 33px;
	}

	.editor {
		width: 1484px;
		height: 982px;
		border: 2px solid #c1c5ce;
		border-radius: 16px;
		overflow: hidden;
	}

	.tools {
		height: 138px;
		padding: 10px 7px 0 8px;
		background: #f1f2f4;
		color: #6f7a90;
	}

	.tools-row {
		height: 61px;
		display: flex;
		align-items: center;
	}

	.tools-row > span {
		position: relative;
		width: 54px;
		height: 38px;
		flex: none;
		display: flex;
		align-items: center;
		justify-content: center;
	}

	.tools-row > .off {
		color: #c1c6d1;
	}

	.tools-row > .last {
		margin-left: auto;
	}

	.tools-row > .color::after,
	.tools-row > .bucket::after {
		content: '';
		position: absolute;
		left: 14px;
		bottom: 1px;
		width: 26px;
		height: 4px;
		background: #181c25;
	}

	.tools-row > .bucket::after {
		background: #fff;
	}

	.tools-row > .glyph {
		margin-left: 8px;
		padding-bottom: 3px;
		font-size: 29px;
	}

	.tools-row > .crm {
		padding-bottom: 1px;
		font-size: 16px;
		font-weight: 500;
	}

	.nums {
		position: absolute;
		left: 12px;
		top: 3px;
		width: 8px;
		height: 32px;
		fill: currentColor;
		font-size: 10px;
	}

	.divider {
		width: 2px;
		height: 28px;
		margin: 0 8px;
		background: #c1c6d1;
	}

	.divider.wide {
		margin-right: 15px;
	}

	.select {
		width: 132px;
		height: 56px;
		margin: 2px 8px 0;
		padding: 0 14px 0 18px;
		display: flex;
		align-items: center;
		justify-content: space-between;
		border-radius: 10px;
		background: #fff;
		font-size: 26px;
		color: #181c25;
	}

	.select :global(.icon) {
		color: #c1c6d1;
	}

	.content {
		padding: 76px 0 0 20px;
	}

	.snapshot {
		width: 890px;
		height: 720px;
		overflow: hidden;
	}

	.snapshot .board {
		transform: scale(0.3361);
		transform-origin: 0 0;
	}

	.scroll {
		position: absolute;
		right: 4px;
		top: 4px;
		width: 12px;
		height: 714px;
		border-radius: 6px;
		background: #dedfe1;
	}

	.modal-foot {
		height: 106px;
		padding: 20px 56px 0;
		display: flex;
		justify-content: flex-end;
		gap: 14px;
		border-top: 2px solid #dee1e6;
		font-size: 28px;
	}

	.modal-foot button {
		width: 124px;
		height: 64px;
		padding-bottom: 2px;
	}

	.modal-foot button:nth-child(2) {
		width: 181px;
	}

	.modal-foot .primary {
		border: 0;
		color: #fff;
		background: #ff8000;
	}
</style>
